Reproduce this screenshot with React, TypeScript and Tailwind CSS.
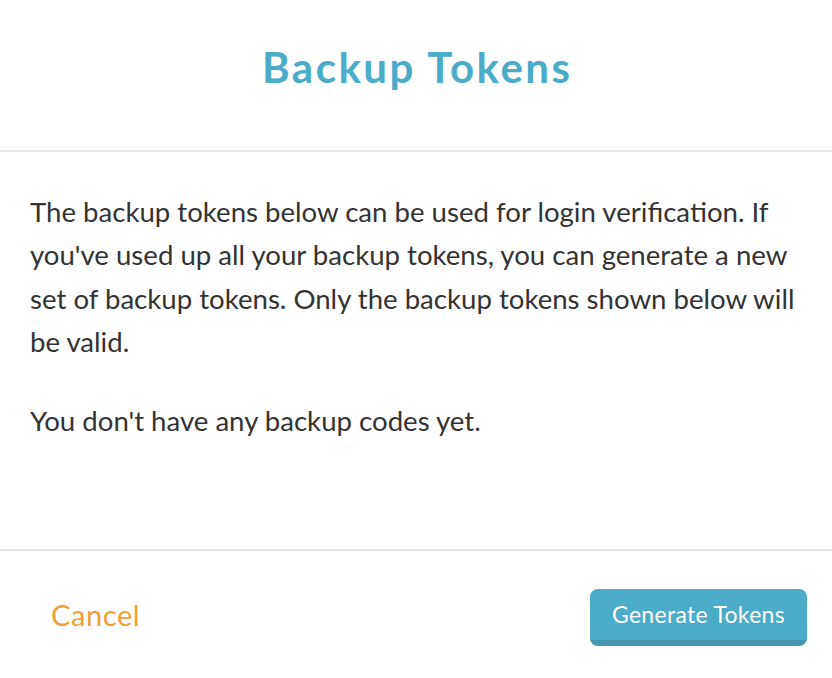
export default function App() {
  return (
    <div className="w-[832px] h-[678px] bg-white flex flex-col font-['Lato',sans-serif] text-[#333]">
      <div className="h-[152px] pt-[46px] border-b-2 border-[#e6e6e6] text-center">
        <h1 className="text-[42px] leading-[42px] font-bold text-[#4aacc8] tracking-[2.5px] pl-[2.5px]">
          Backup Tokens
        </h1>
      </div>
      <div className="h-[397px] pl-[30px] pr-[18px] pt-[38px] text-[27.6px] leading-[43.3px]">
        <p>
          The backup tokens below can be used for login verification. If you've used up all your
          backup tokens, you can generate a new set of backup tokens. Only the backup tokens shown
          below will be valid.
        </p>
        <p className="mt-[36px]">You don't have any backup codes yet.</p>
      </div>
      <div className="flex-1 border-t-2 border-[#e6e6e6] flex items-center justify-between pl-[51px] pr-[25px]">
        <button className="text-[29px] leading-[29px] text-[#f0a035] tracking-[0.6px]">Cancel</button>
        <button className="mt-[6px] h-[57px] px-[22px] rounded-[8px] bg-[#4cabc7] border-b-[6px] border-[#4398b0] text-white text-[23px] tracking-[0.3px]">
          Generate Tokens
        </button>
      </div>
    </div>
  );
}
